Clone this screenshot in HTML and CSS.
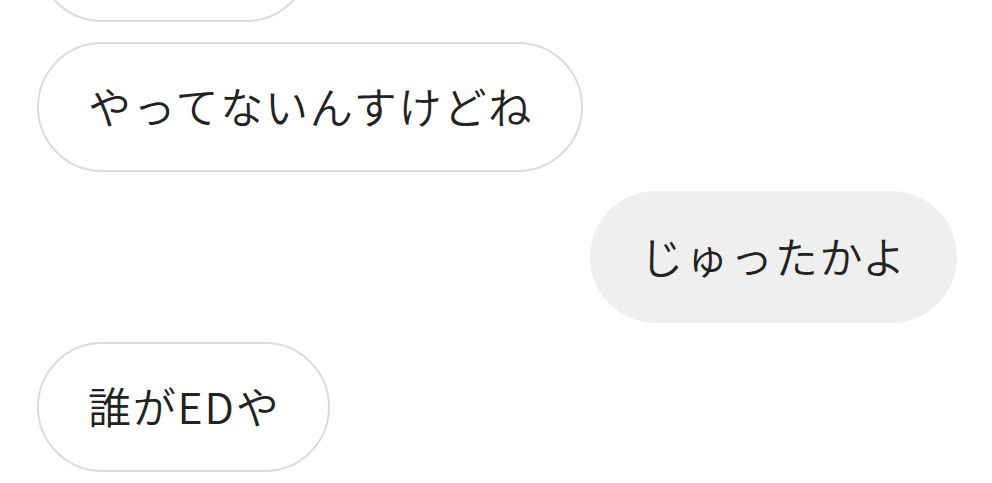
FILE: index.html
```html
<!DOCTYPE html>
<html lang="ja">
<head>
<meta charset="utf-8">
<link rel="stylesheet" href="styles.css">
</head>
<body>
<div class="chat">
  <div class="bubble in top"><span class="hidden">　</span></div>
  <div class="bubble in">やってないんすけどね</div>
  <div class="bubble out">じゅったかよ</div>
  <div class="bubble in">誰がEDや</div>
</div>
</body>
</html>
```

FILE: styles.css
```css
html, body {
  margin: 0;
  padding: 0;
  background: #ffffff;
  overflow: hidden;
}
.chat {
  display: flex;
  flex-direction: column;
  align-items: flex-start;
  gap: 19px;
  margin-top: -108px;
  padding-left: 37px;
  padding-right: 35px;
  font-family: "Noto Sans CJK JP", "Noto Sans", sans-serif;
}
.bubble {
  box-sizing: border-box;
  height: 130px;
  border-radius: 65px;
  padding: 0 48px 5px 49px;
  display: flex;
  align-items: center;
  font-size: 43px;
  font-weight: 350;
  letter-spacing: 1.8px;
  color: #222222;
  white-space: nowrap;
}
.in {
  border: 2px solid #dcdcdc;
  background: #ffffff;
}
.top {
  width: 274px;
  margin-bottom: 1px;
}
.hidden {
  visibility: hidden;
}
.out {
  align-self: flex-end;
  background: #efefef;
  height: 132px;
  border-radius: 66px;
  padding: 0 50px 5px 50px;
}
```
